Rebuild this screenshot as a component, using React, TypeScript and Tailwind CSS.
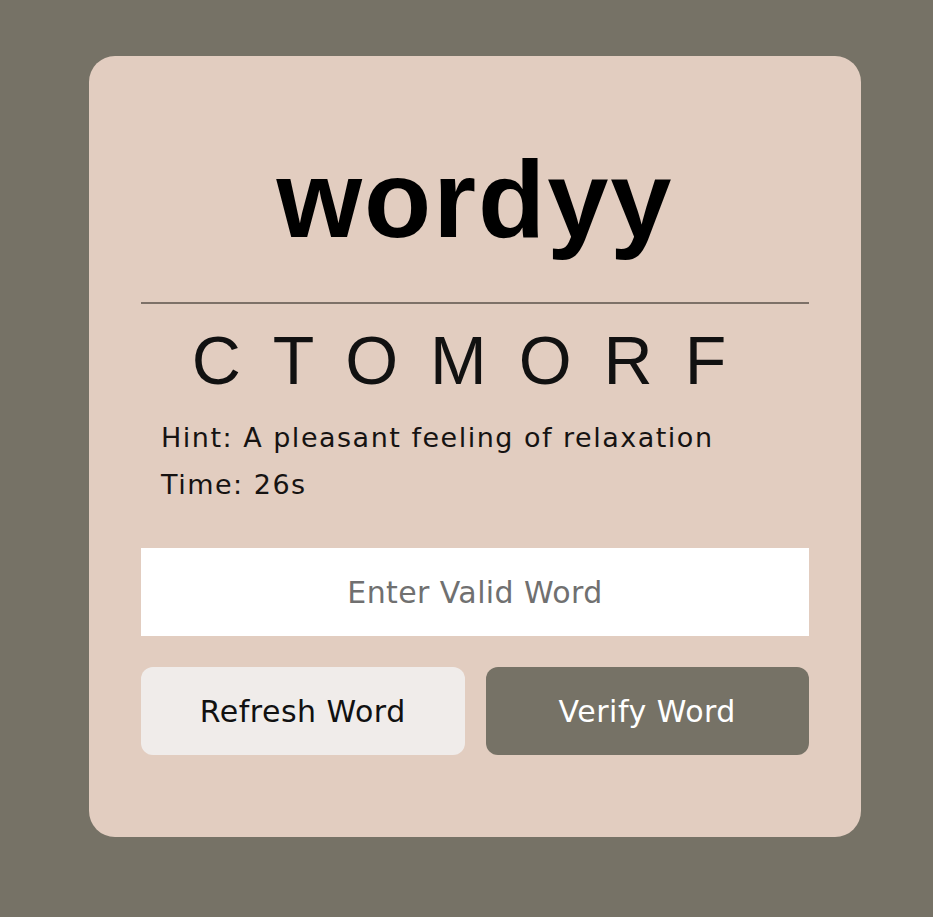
import { useState } from "react";

const letters = ["C", "T", "O", "M", "O", "R", "F"];

export default function App() {
  const [guess, setGuess] = useState("");

  return (
    <div className="min-h-screen bg-[#767266] pl-[89px] pt-[56px] font-['DejaVu_Sans',sans-serif]">
      <div className="w-[772px] rounded-[26px] bg-[#e2cdc0] px-[52px] pt-[88px] pb-[82px]">
        <h1 className="text-center font-['Liberation_Sans',Arial,sans-serif] text-[110px] font-bold leading-none tracking-[2px] text-black">
          wordyy
        </h1>

        <div className="mt-[48px] h-[2px] bg-[#7d7168]" />

        <p className="mt-[22px] text-center font-['Liberation_Sans',Arial,sans-serif] text-[68px] leading-none tracking-[32px] text-[#111]">
          {letters.join("")}
        </p>

        <div className="mt-[20px] pl-[20px] text-[27px] leading-[47px] tracking-[1.5px] text-[#161312]">
          <p>Hint: A pleasant feeling of relaxation</p>
          <p>Time: 26s</p>
        </div>

        <input
          type="text"
          value={guess}
          onChange={e => setGuess(e.target.value)}
          placeholder="Enter Valid Word"
          className="mt-[40px] block h-[88px] w-full bg-white text-center text-[30px] tracking-[0.4px] text-[#222] outline-none placeholder:text-[#707070]"
        />

        <div className="mt-[31px] grid grid-cols-2 gap-[21px]">
          <button
            type="button"
            onClick={() => setGuess("")}
            className="h-[88px] cursor-pointer rounded-[12px] bg-[#f0ecea] text-[30px] tracking-[0.5px] text-[#111]"
          >
            Refresh Word
          </button>
          <button
            type="button"
            className="h-[88px] cursor-pointer rounded-[12px] bg-[#767266] text-[30px] tracking-[0.5px] text-white"
          >
            Verify Word
          </button>
        </div>
      </div>
    </div>
  );
}
